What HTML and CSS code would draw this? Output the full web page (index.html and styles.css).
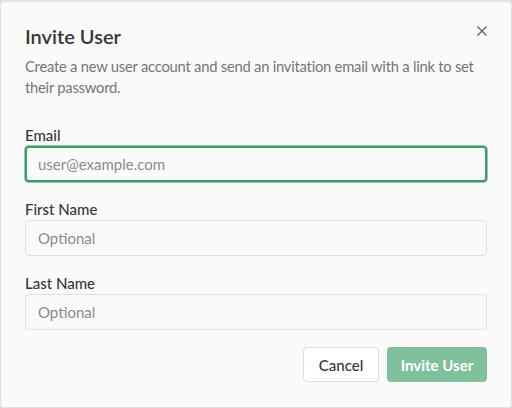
FILE: index.html
```html
<!DOCTYPE html>
<html>
<head lang="en">
    <meta charset="UTF-8">
    <title>Invite User</title>
    <link rel="stylesheet" href="styles.css">
</head>
<body>
<div class="dialog">
    <div class="dialog-head">
        <h2 class="dialog-title">Invite User</h2>
        <span class="dialog-close">
            <svg width="12" height="12" viewBox="0 0 12 12"><path d="M1.5 1.5 L10.5 10.5 M10.5 1.5 L1.5 10.5" stroke="#666" stroke-width="1.4" fill="none"/></svg>
        </span>
    </div>
    <p class="dialog-desc">Create a new user account and send an invitation email with a link to set their password.</p>
    <form class="dialog-form">
        <div class="field">
            <label>Email</label>
            <input type="text" class="input input-active" placeholder="user@example.com">
        </div>
        <div class="field">
            <label>First Name</label>
            <input type="text" class="input" placeholder="Optional">
        </div>
        <div class="field">
            <label>Last Name</label>
            <input type="text" class="input" placeholder="Optional">
        </div>
        <div class="actions">
            <button type="button" class="btn btn-cancel">Cancel</button>
            <button type="button" class="btn btn-primary">Invite User</button>
        </div>
    </form>
</div>
</body>
</html>
```

FILE: styles.css
```css
* {
    margin: 0;
    padding: 0;
    box-sizing: border-box;
}

body {
    background: #dfe4e1;
    font-family: Lato, "Noto Sans", sans-serif;
    padding: 2px 1px 1px 1px;
    height: 408px;
}

.dialog {
    height: 405px;
    background: #fafafa;
    border-radius: 4px;
    padding: 20px 24px 0 24px;
}

.dialog-head {
    display: flex;
    justify-content: space-between;
    align-items: flex-start;
}

.dialog-title {
    font-size: 20px;
    font-weight: 600;
    color: #363636;
    line-height: 28px;
}

.dialog-close {
    display: flex;
    margin-top: 3px;
    margin-right: -1px;
    cursor: pointer;
}

.dialog-desc {
    font-size: 14.8px;
    letter-spacing: -0.25px;
    line-height: 21px;
    color: #757575;
    margin-top: 6px;
}

.dialog-form {
    margin-top: 27px;
}

.field {
    display: flex;
    flex-direction: column;
    margin-bottom: 17px;
}

.field label {
    font-size: 15px;
    font-weight: 500;
    color: #363636;
    line-height: 20px;
    margin-bottom: 1px;
}

.input {
    height: 36px;
    border: 1px solid #e0e0e0;
    border-radius: 4px;
    background: #fafafa;
    padding: 0 12px;
    font-family: Lato, "Noto Sans", sans-serif;
    font-size: 15px;
    color: #333;
    outline: none;
}

.input::placeholder {
    color: #8a8a8a;
}

.input-active {
    border: 2px solid #3e9a69;
    box-shadow: 0 0 0 1px #8fcaa9;
    padding: 0 11px;
}

.actions {
    display: flex;
    justify-content: flex-end;
    gap: 8px;
}

.btn {
    height: 35px;
    border-radius: 4px;
    font-family: Lato, "Noto Sans", sans-serif;
    font-size: 15px;
    cursor: pointer;
}

.btn-cancel {
    width: 76px;
    background: #fff;
    border: 1px solid #dcdcdc;
    color: #363636;
    font-weight: 500;
}

.btn-primary {
    width: 100px;
    background: #80c09b;
    border: none;
    color: #fff;
    font-weight: 700;
}
```
